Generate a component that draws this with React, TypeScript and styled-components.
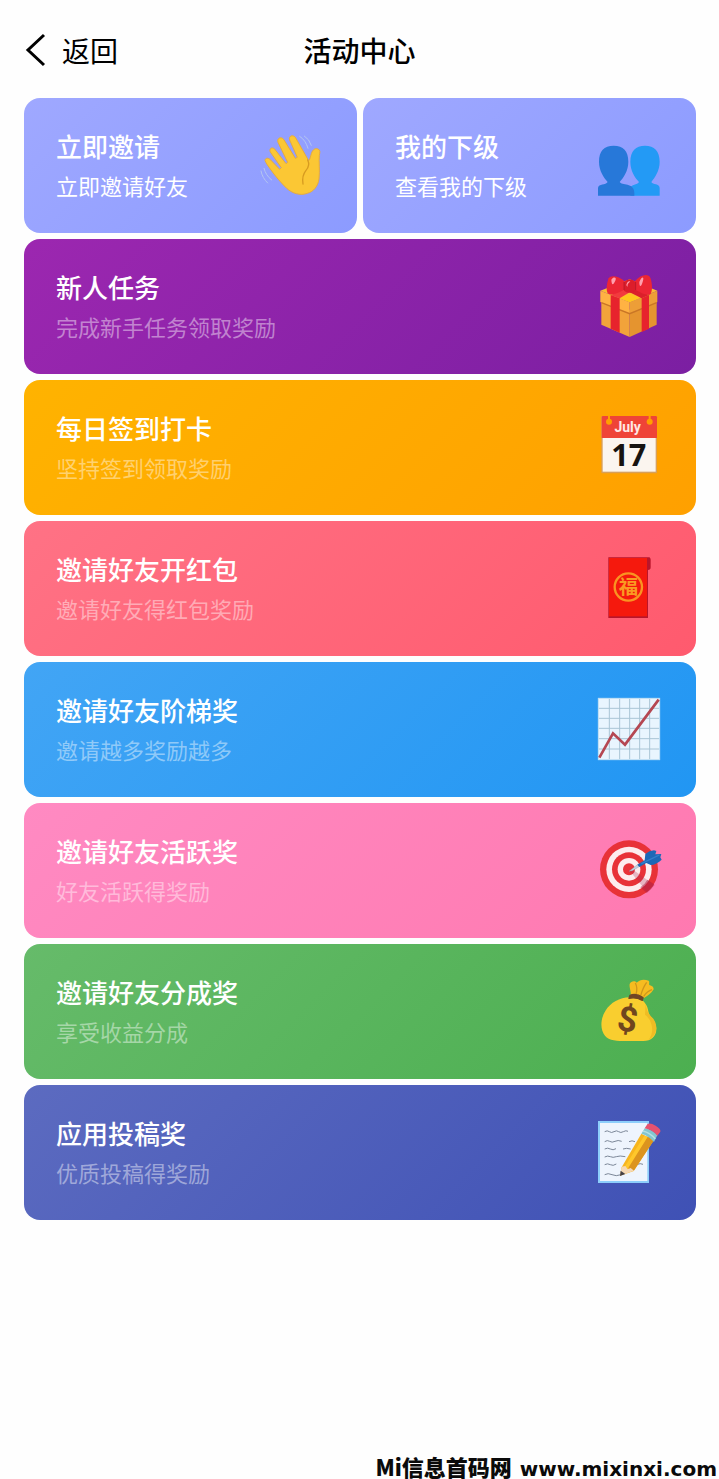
import React from 'react';
import styled, { createGlobalStyle } from 'styled-components';

const GlobalStyle = createGlobalStyle`
  *, *::before, *::after { box-sizing: border-box; }
  body {
    margin: 0;
    background: #fefefe;
    font-family: "Noto Sans CJK SC", "Noto Sans", sans-serif;
  }
`;

const Page = styled.div`
  min-height: 100vh;
  display: flex;
  flex-direction: column;
  overflow: clip;
`;

const Header = styled.header`
  height: 98px;
  padding: 2px 24px 0;
  display: grid;
  grid-template-columns: 1fr auto 1fr;
  align-items: center;
  color: #000;
`;

const BackButton = styled.button`
  justify-self: start;
  display: flex;
  align-items: center;
  gap: 14px;
  padding: 0;
  border: 0;
  background: none;
  font: inherit;
  font-size: 28px;
  line-height: 40px;
  color: inherit;
  cursor: pointer;
`;

const BackArrow = styled.svg`
  width: 24px;
  height: 36px;
`;

const PageTitle = styled.h1`
  margin: 0;
  font-size: 28px;
  line-height: 40px;
  font-weight: 500;
`;

const CardGrid = styled.main`
  display: grid;
  grid-template-columns: 1fr 1fr;
  gap: 6px;
  padding: 0 23px 0 24px;
`;

const Card = styled.button<{ $from: string; $to: string; $half?: boolean }>`
  grid-column: ${(p) => (p.$half ? 'auto' : '1 / -1')};
  display: flex;
  align-items: center;
  justify-content: space-between;
  height: 135px;
  padding: 0 32px;
  border: 0;
  border-radius: 16px;
  background: linear-gradient(135deg, ${(p) => p.$from}, ${(p) => p.$to});
  font: inherit;
  color: #fff;
  text-align: left;
  cursor: pointer;
`;

const CardText = styled.span`
  display: flex;
  flex-direction: column;
  padding-bottom: 4px;
`;

const CardTitle = styled.span`
  font-size: 26px;
  line-height: 42px;
  font-weight: 500;
`;

const CardNote = styled.span<{ $bright?: boolean }>`
  font-size: 22px;
  line-height: 36px;
  color: ${(p) => (p.$bright ? '#fff' : 'rgba(255, 255, 255, 0.44)')};
`;

const IconFrame = styled.svg`
  flex: none;
  width: 70px;
  height: 71px;
`;

const Footer = styled.footer`
  margin-top: auto;
  padding-right: 2px;
  display: flex;
  justify-content: flex-end;
  align-items: baseline;
  gap: 8px;
  font-family: "DejaVu Sans", "Noto Sans CJK SC", sans-serif;
  font-size: 20px;
  line-height: 20px;
  font-weight: 700;
  color: #0a0a0a;
`;

const SiteName = styled.span`
  font-family: "Noto Sans CJK SC", sans-serif;
  font-size: 22px;
  font-weight: 900;
`;

const WaveIcon = () => (
  <IconFrame viewBox="45 30 210 213" aria-hidden="true">
    <path
      d="M75 121 C76 113 85 113 91 119 L119 148 L124 143 L91 96 C87 87 94 80 103 86 L138 131 L143 127 L114 67 C110 54 123 49 131 58 L166 115 L172 112 L149 60 C145 48 158 43 166 52 L206 122 C211 117 211 110 214 101 C218 87 227 84 234 87 C241 90 240 96 238 106 C236 125 240 151 237 177 C234 199 221 215 202 220 C180 228 157 220 140 205 C124 189 107 170 93 150 C85 139 78 130 75 121 Z"
      fill="#fbc734"
      stroke="#e8ac3b"
      strokeWidth="3"
    />
    <path d="M203 120 C209 132 206 142 198 151 C189 162 186 174 189 192" fill="none" stroke="#d79b20" strokeWidth="4" strokeLinecap="round" />
    <g fill="none" stroke="#b4c6f0" strokeWidth="3" strokeLinecap="round">
      <path d="M179 49 Q197 60 204 85" />
      <path d="M193 48 Q208 57 214 76" />
      <path d="M72 145 Q77 166 95 180" />
      <path d="M63 153 Q67 174 83 189" />
    </g>
  </IconFrame>
);

const PeopleIcon = () => (
  <IconFrame viewBox="27 15 210 213" aria-hidden="true">
    <path
      d="M180 62 C208 62 224 78 224 110 C224 138 209 158 199 171 C203 180 224 175 224 189 V212 H136 V189 C138 178 157 180 162 171 C150 158 136 138 136 110 C136 78 152 62 180 62 Z"
      fill="#239af5"
    />
    <path
      d="M86 62 C115 62 130 78 130 110 C130 138 115 158 104 171 C109 182 148 172 148 203 V212 H39 V189 C41 175 62 181 68 171 C57 158 42 138 42 110 C42 78 57 62 86 62 Z"
      fill="#2778d9"
    />
  </IconFrame>
);

const GiftIcon = () => (
  <IconFrame viewBox="27 27 210 213" aria-hidden="true">
    <path d="M49 113 L134 143 V225 L49 188 Z" fill="#f2a33a" />
    <path d="M215 113 L134 143 V225 L215 188 Z" fill="#e5942f" />
    <path d="M46 86 L134 52 L217 86 L134 121 Z" fill="#f9bd35" />
    <path d="M46 86 L134 121 V154 L46 120 Z" fill="#ffb243" />
    <path d="M217 86 L134 121 V154 L217 120 Z" fill="#ed9e37" />
    <path d="M49 122 L134 155 L215 122" fill="none" stroke="#c97626" strokeWidth="4" />
    <path d="M101 108 L134 95 L166 108 L134 121 Z" fill="#ffc61d" />
    <path d="M77 99 L104 109 V212 L77 200 Z" fill="#e7232d" />
    <path d="M192 99 L170 109 V210 L192 200 Z" fill="#e7232d" />
    <path d="M77 99 L117 82 L134 91 L104 109 Z" fill="#f23a3e" />
    <path d="M192 99 L152 82 L134 91 L170 109 Z" fill="#db202b" />
    <path d="M120 59 C100 40 76 39 71 49 C66 62 62 81 68 94 C76 103 104 92 120 82 Z" fill="#ec2634" />
    <path d="M148 59 C168 37 190 34 196 47 C201 60 204 83 197 96 C187 104 165 91 148 82 Z" fill="#ec2634" />
    <path d="M117 60 Q134 44 152 60 V86 Q134 99 117 86 Z" fill="#dc1d2b" />
    <path d="M79 53 C86 43 96 46 91 56 C83 73 80 68 79 53 Z" fill="#ff9fae" />
    <path d="M163 60 C170 42 178 44 174 56 C169 76 163 77 163 60 Z" fill="#ff9fae" />
    <path d="M124 69 Q127 55 136 58 Q128 63 127 75 Z" fill="#ff9fae" />
    <path d="M117 60 V84 M152 60 V84" stroke="#aa1525" strokeWidth="2" />
  </IconFrame>
);

const CalendarIcon = () => (
  <IconFrame viewBox="27 21 210 213" aria-hidden="true">
    <rect x="49" y="34" width="167" height="171" rx="3" fill="#d8a05a" />
    <rect x="53" y="95" width="159" height="105" fill="#fbf5ef" />
    <path d="M50 36 Q50 33 54 33 H212 Q216 33 216 37 V99 H50 Z" fill="#ef4437" />
    <g fill="#ffa000">
      <circle cx="72" cy="50" r="9" />
      <rect x="69" y="30" width="6" height="21" />
      <circle cx="194" cy="50" r="9" />
      <rect x="191" y="30" width="6" height="21" />
    </g>
    <text x="128" y="81" textAnchor="middle" fontFamily="Roboto, sans-serif" fontWeight="700" fontSize="42" fill="#ffe9e4">July</text>
    <text x="131" y="184" textAnchor="middle" fontFamily="'Open Sans', sans-serif" fontWeight="700" fontSize="92" fill="#17130f">17</text>
  </IconFrame>
);

const EnvelopeIcon = () => (
  <IconFrame viewBox="27 24 210 213" aria-hidden="true">
    <path d="M70 37 H193 Q198 39 197 50 V67 Q197 75 189 75 V219 H70 Z" fill="#b9152b" />
    <rect x="72" y="39" width="114" height="175" fill="#f5190d" />
    <circle cx="130" cy="126" r="41" fill="none" stroke="#f99422" strokeWidth="7" />
    <text x="130" y="147" textAnchor="middle" fontFamily="'Noto Sans CJK SC', sans-serif" fontWeight="700" fontSize="58" fill="#fa9a22">福</text>
  </IconFrame>
);

const ChartIcon = () => (
  <IconFrame viewBox="27 27 210 213" aria-hidden="true">
    <rect x="39" y="39" width="186" height="186" fill="#e9f5fe" />
    <path
      d="M73 41 V223 M104 41 V223 M134 41 V223 M164 41 V223 M194 41 V223 M41 70 H223 M41 100 H223 M41 130 H223 M41 161 H223 M41 192 H223"
      stroke="#a9c4d5"
      strokeWidth="3"
    />
    <rect x="40" y="40" width="184" height="184" fill="none" stroke="#b9dcf4" strokeWidth="3" />
    <path d="M43 218 L84 145 L120 179 L221 44" fill="none" stroke="#b54752" strokeWidth="8" />
  </IconFrame>
);

const TargetIcon = () => (
  <IconFrame viewBox="27 30 210 213" aria-hidden="true">
    <circle cx="132" cy="133" r="87" fill="#e83238" />
    <circle cx="132" cy="133" r="68" fill="#fdecee" />
    <circle cx="132" cy="133" r="51" fill="#e83238" />
    <circle cx="132" cy="133" r="34" fill="#fdecee" />
    <circle cx="132" cy="133" r="18" fill="#e83238" />
    <path d="M135 139 L145 135 L209 181 L187 202 Z" fill="#ad2c55" opacity="0.28" />
    <path d="M187 164 L208 178 Q200 194 185 204 L166 187 Q179 179 187 164 Z" fill="#b51d3f" opacity="0.5" />
    <path d="M132 139 L160 117 L166 123 L142 137 Z" fill="#c5d2df" stroke="#778caa" strokeWidth="1" />
    <path d="M157 119 L179 106 L181 87 Q193 77 207 76 L214 78 L211 88 L229 87 L226 97 L230 104 Q214 119 197 120 L184 114 L163 126 Z" fill="#1d68b7" />
    <path d="M169 116 L223 90" stroke="#3480cc" strokeWidth="4" />
  </IconFrame>
);

const MoneyIcon = () => (
  <IconFrame viewBox="27 24 210 213" aria-hidden="true">
    <path d="M137 82 C139 71 132 57 134 48 C138 38 151 38 155 44 C165 34 177 33 191 38 C195 42 191 47 193 51 Q206 54 206 64 Q198 78 177 90 Z" fill="#f6bc20" />
    <path d="M151 45 Q159 60 153 79 M185 43 Q174 58 167 83 M201 65 Q187 69 176 85" fill="none" stroke="#cf961b" strokeWidth="4" />
    <path d="M134 88 C104 89 77 103 61 129 C47 151 44 184 60 203 C72 218 97 219 125 219 H175 C199 219 215 205 214 181 C213 157 192 146 190 130 C188 112 178 101 168 93 Z" fill="#f9ce2f" />
    <path d="M182 108 Q184 130 196 143 Q214 158 214 181 Q213 203 190 216 Q207 196 199 169 Q195 151 180 140" fill="#efbc24" />
    <path d="M135 82 Q153 74 174 89 L172 97 Q152 86 132 91 Z" fill="#704526" stroke="#704526" strokeWidth="4" strokeLinejoin="round" />
    <text x="128" y="190" textAnchor="middle" transform="rotate(10 128 155)" fontFamily="Roboto, sans-serif" fontWeight="700" fontSize="104" fill="#70461e">$</text>
  </IconFrame>
);

const MemoIcon = () => (
  <IconFrame viewBox="27 27 210 213" aria-hidden="true">
    <rect x="39" y="39" width="153" height="186" fill="#8dcefb" />
    <rect x="45" y="45" width="142" height="174" fill="#eef4fd" />
    <g fill="none" stroke="#7c8798" strokeWidth="3">
      <path d="M59 71 q8 -5 14 0 t14 0 t14 0 t14 0 t14 -1" />
      <path d="M59 101 q8 -6 15 -1 t16 0 t20 0 M132 101 q9 -5 18 0" />
      <path d="M59 123 q9 -5 17 0 t17 -1 M114 123 q10 -4 23 0" />
      <path d="M59 147 q9 -5 17 -1 t18 0 t27 0" />
      <path d="M59 170 q9 -5 17 0 t18 -2 M59 200 q10 -6 22 0 t27 0 M158 169 q7 -4 16 0" />
    </g>
    <path d="M110 178 L169 77 L207 96 L146 189 L105 203 Z" fill="#f7b51e" />
    <path d="M127 179 L188 86 L207 96 L146 189 Z" fill="#dc941e" />
    <path d="M119 176 L178 83 L188 86 L128 183 Z" fill="#ffc72b" />
    <path d="M110 176 L105 203 L147 188 L137 180 L128 184 L121 174 Z" fill="#f5d8b5" />
    <path d="M107 188 L105 204 L121 198 Z" fill="#454044" />
    <path d="M169 77 L179 61 Q202 64 217 82 L207 102 Q190 82 169 77 Z" fill="#83c5cf" />
    <path d="M174 69 Q195 74 211 93" fill="none" stroke="#b5e0e5" strokeWidth="4" />
    <path d="M179 61 L187 49 Q194 43 212 53 Q229 63 226 71 L217 83 Q202 65 179 61 Z" fill="#e75270" />
  </IconFrame>
);

interface Activity {
  title: string;
  note: string;
  from: string;
  to: string;
  icon: React.ComponentType;
  half?: boolean;
}

const activities: Activity[] = [
  { title: '立即邀请', note: '立即邀请好友', from: '#9fa8ff', to: '#8c9bff', icon: WaveIcon, half: true },
  { title: '我的下级', note: '查看我的下级', from: '#9fa8ff', to: '#8c9bff', icon: PeopleIcon, half: true },
  { title: '新人任务', note: '完成新手任务领取奖励', from: '#9c27b0', to: '#7b1fa2', icon: GiftIcon },
  { title: '每日签到打卡', note: '坚持签到领取奖励', from: '#ffb300', to: '#ffa000', icon: CalendarIcon },
  { title: '邀请好友开红包', note: '邀请好友得红包奖励', from: '#ff7285', to: '#ff5a6e', icon: EnvelopeIcon },
  { title: '邀请好友阶梯奖', note: '邀请越多奖励越多', from: '#42a5f5', to: '#2196f3', icon: ChartIcon },
  { title: '邀请好友活跃奖', note: '好友活跃得奖励', from: '#ff8ac2', to: '#ff79b0', icon: TargetIcon },
  { title: '邀请好友分成奖', note: '享受收益分成', from: '#66bb6a', to: '#4caf50', icon: MoneyIcon },
  { title: '应用投稿奖', note: '优质投稿得奖励', from: '#5c6bc0', to: '#3f51b5', icon: MemoIcon },
];

export default function App() {
  return (
    <Page>
      <GlobalStyle />
      <Header>
        <BackButton type="button">
          <BackArrow viewBox="0 0 24 36" aria-hidden="true">
            <path d="M20 3 L4 18 L20 33" fill="none" stroke="#000" strokeWidth="3" />
          </BackArrow>
          返回
        </BackButton>
        <PageTitle>活动中心</PageTitle>
      </Header>
      <CardGrid>
        {activities.map(({ title, note, from, to, icon: Icon, half }) => (
          <Card key={title} type="button" $from={from} $to={to} $half={half}>
            <CardText>
              <CardTitle>{title}</CardTitle>
              <CardNote $bright={half}>{note}</CardNote>
            </CardText>
            <Icon />
          </Card>
        ))}
      </CardGrid>
      <Footer>
        <SiteName>Mi信息首码网</SiteName>
        <span>www.mixinxi.com</span>
      </Footer>
    </Page>
  );
}
